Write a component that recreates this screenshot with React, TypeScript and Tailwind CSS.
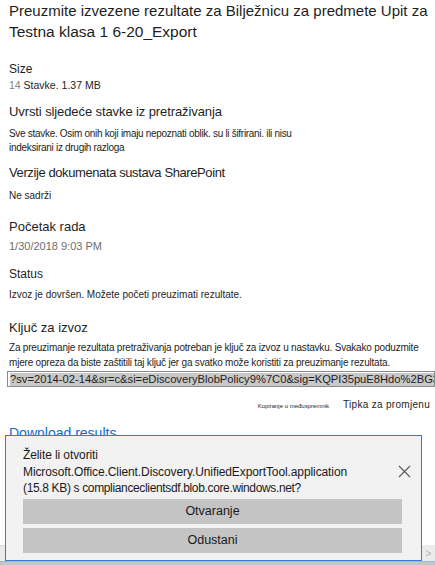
import React from "react";

function CloseIcon() {
  return (
    <svg width="13" height="13" viewBox="0 0 13 13" fill="none">
      <path d="M1 1L12 12M12 1L1 12" stroke="#5a5a5a" strokeWidth="1.1" />
    </svg>
  );
}

export default function App() {
  return (
    <div className="relative w-[435px] h-[565px] overflow-hidden bg-white font-['Liberation_Sans',Arial,sans-serif] text-[#1e1e1e]">
      <div className="pl-[9px]">
        <h1 className="text-[15px] leading-[21px] whitespace-nowrap">
          Preuzmite izvezene rezultate za Bilježnicu za predmete Upit za
          <br />
          <span className="text-[15.5px]">Testna klasa 1 6-20_Export</span>
        </h1>

        <div className="mt-[20px] text-[12px] leading-[15px]">Size</div>
        <div className="mt-[1px] text-[10.5px] leading-[15px]">
          <span className="text-[#808080]">14</span> Stavke. 1.37 MB
        </div>

        <div className="mt-[10px] text-[13px] leading-[18px] tracking-[-0.1px]">Uvrsti sljedeće stavke iz pretraživanja</div>
        <div className="mt-[6px] text-[10px] leading-[14px] whitespace-nowrap tracking-[-0.3px]">
          Sve stavke. Osim onih koji imaju nepoznati oblik. su li šifrirani. ili nisu
          <br />
          indeksirani iz drugih razloga
        </div>

        <div className="mt-[9px] text-[13px] leading-[18px] tracking-[-0.4px]">Verzije dokumenata sustava SharePoint</div>
        <div className="mt-[7px] text-[10px] leading-[14px]">Ne sadrži</div>

        <div className="mt-[15px] text-[13px] leading-[18px]">Početak rada</div>
        <div className="mt-[3px] text-[11px] leading-[15px] text-[#6e6e6e]">1/30/2018 9:03 PM</div>

        <div className="mt-[13px] text-[12px] leading-[15px]">Status</div>
        <div className="mt-[6px] text-[10px] leading-[14px]">Izvoz je dovršen. Možete početi preuzimati rezultate.</div>

        <div className="mt-[17px] text-[13px] leading-[18px]">Ključ za izvoz</div>
        <div className="mt-[3px] text-[10px] leading-[15px] whitespace-nowrap tracking-[-0.2px]">
          Za preuzimanje rezultata pretraživanja potreban je ključ za izvoz u nastavku. Svakako poduzmite
          <br />
          mjere opreza da biste zaštitili taj ključ jer ga svatko može koristiti za preuzimanje rezultata.
        </div>
      </div>

      <div className="ml-[7px] mt-[1px] h-[16px] w-[428px] overflow-hidden border border-[#8a8a8a] bg-white pl-[2px] flex items-center">
        <span className="whitespace-nowrap bg-[#c8c8c8] text-[11.2px] leading-[13px] text-[#1e1e1e]">
          ?sv=2014-02-14&amp;sr=c&amp;si=eDiscoveryBlobPolicy9%7C0&amp;sig=KQPI35puE8Hdo%2BG3c0
        </span>
      </div>

      <div className="mt-[10px] flex items-baseline justify-end pr-[5px] gap-[14px]">
        <span className="text-[6px] leading-[15px]">Kopiranje u međuspremnik</span>
        <span className="text-[10px] leading-[15px] tracking-[0.3px]">Tipka za promjenu</span>
      </div>

      <div className="pl-[9px] mt-[10px] text-[14px] leading-[18px] text-[#0a6ed1]">Download results</div>

      {/* horizontal scrollbar fragments under the notification */}
      <div className="absolute left-0 top-[545px] h-[16px] w-[5px] bg-[#ebebeb] border-t border-[#dadada]" />
      <div className="absolute right-0 top-[545px] h-[16px] w-[13px] bg-[#ebebeb] flex items-center justify-center text-[10px] text-[#b0b0b0]">
        &gt;
      </div>

      {/* download notification bar */}
      <div className="absolute left-[5px] top-[435px] w-[417px] h-[126px] border-[1.5px] border-[#2f7fd8] bg-[#f2f2f2]">
        <div className="flex items-center pl-[17px] pr-[10px] pt-[11px]">
          <div className="flex-1 text-[12px] leading-[16.5px] text-[#1a1a1a] whitespace-nowrap tracking-[-0.1px]">
            Želite li otvoriti
            <br />
            Microsoft.Office.Client.Discovery.UnifiedExportTool.application
            <br />
            <span className="tracking-[-0.35px]">(15.8 KB) s complianceclientsdf.blob.core.windows.net?</span>
          </div>
          <CloseIcon />
        </div>
        <div className="mt-[2px] ml-[17px] w-[379px] flex flex-col gap-[4px]">
          <div className="h-[25px] bg-[#c4c4c4] flex items-center justify-center text-[12.5px] text-[#1a1a1a]">Otvaranje</div>
          <div className="h-[25px] bg-[#c4c4c4] flex items-center justify-center text-[12.5px] text-[#1a1a1a]">Odustani</div>
        </div>
      </div>

      <div className="absolute left-0 bottom-0 w-[435px] h-[4px] bg-[#c6c6c6] border-t border-[#9fb8d8]" />
    </div>
  );
}
